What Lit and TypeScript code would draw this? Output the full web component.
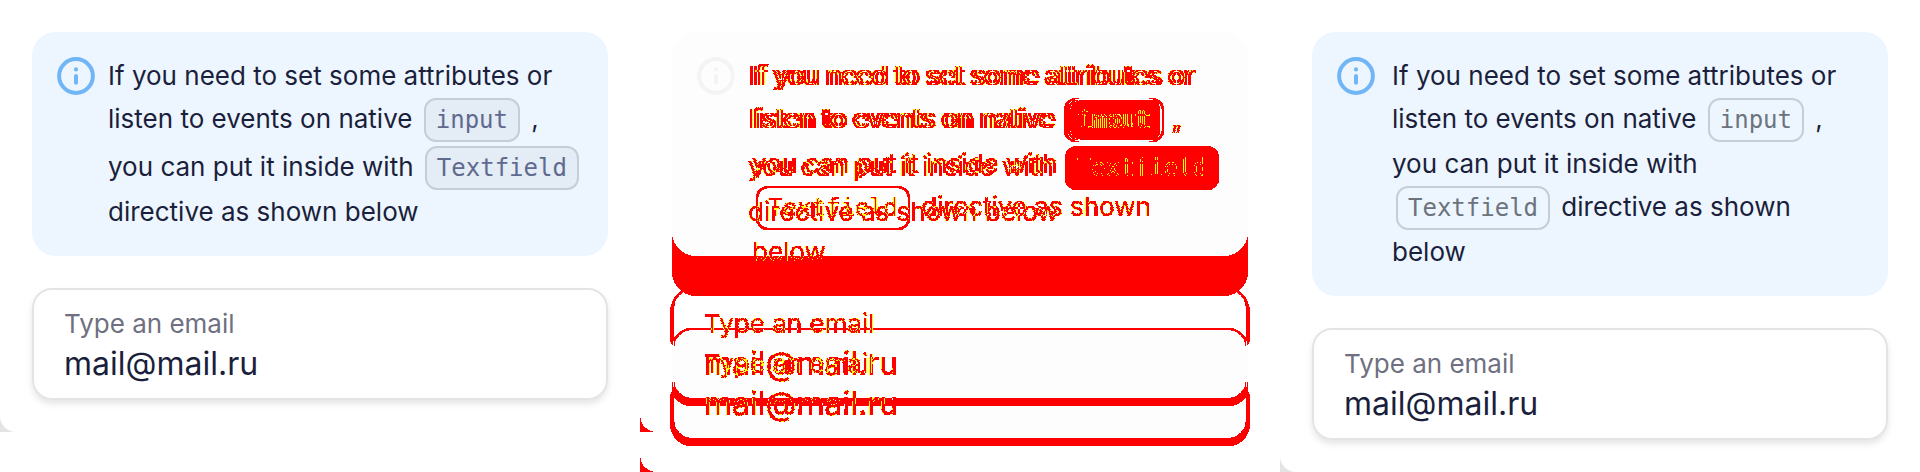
import { LitElement, html, css, svg } from "lit";
import { customElement, property } from "lit/decorators.js";

@customElement("info-note")
class InfoNote extends LitElement {
  static styles = css`
    :host {
      display: flex;
      align-items: flex-start;
      gap: var(--note-gap, 12px);
      padding: 24px;
      border-radius: 24px;
      background: #edf6ff;
      color: #1b1f3b;
    }
    .icon {
      flex: none;
      width: 40px;
      height: 40px;
    }
    .body {
      flex: 1;
      min-width: 0;
    }
  `;
  render() {
    return html`
      <svg class="icon" viewBox="0 0 40 40" aria-hidden="true">
        <circle cx="20" cy="20" r="16.9" fill="none" stroke="#70b6f6" stroke-width="4" />
        <circle cx="20" cy="13.4" r="2.1" fill="#70b6f6" />
        <path d="M20 19.9v6.8" stroke="#70b6f6" stroke-width="4" stroke-linecap="round" />
      </svg>
      <div class="body"><slot></slot></div>
    `;
  }
}

@customElement("email-preview")
class EmailPreview extends LitElement {
  @property({ reflect: true }) variant = "before";

  static styles = css`
    :host {
      display: flow-root;
      background: #e4e4e4;
    }
    .page {
      display: flex;
      flex-direction: column;
      gap: 32px;
      padding: 32px;
      border-radius: 0 0 0 16px;
      background: #fff;
      font: 26px/40px Inter, sans-serif;
    }
    info-note {
      --note-gap: 12px;
    }
    :host([variant="after"]) info-note {
      --note-gap: 16px;
    }
    code {
      display: inline-block;
      margin: 2px 4px;
      padding: 0 10px;
      border: 2px solid #c7cdd7;
      border-radius: 12px;
      background: #e4ecf5;
      color: #5f6a8e;
      font: 24px/40px "DejaVu Sans Mono", monospace;
    }
    :host([variant="after"]) code {
      background: transparent;
      color: #6c737c;
    }
    .field {
      display: flex;
      flex-direction: column;
      padding: 14px 30px;
      border: 2px solid #e4e4e4;
      border-radius: 20px;
      box-shadow: 0 4px 6px rgba(0, 0, 0, 0.1);
    }
    label {
      color: #6f7081;
    }
    input {
      width: 100%;
      height: 40px;
      padding: 0;
      border: 0;
      outline: 0;
      background: none;
      color: #1b1f3b;
      font: 32px/40px Inter, sans-serif;
    }
  `;
  render() {
    return html`
      <div class="page">
        <info-note>
          If you need to set some attributes or listen to events on native
          <code>input</code> , you can put it inside with
          <code>Textfield</code> directive as shown below
        </info-note>
        <div class="field">
          <label for="email">Type an email</label>
          <input id="email" type="email" value="mail@mail.ru" />
        </div>
      </div>
    `;
  }
}

@customElement("app-root")
class AppRoot extends LitElement {
  static styles = css`
    :host {
      display: grid;
      grid-template-columns: repeat(3, minmax(0, 1fr));
      align-items: start;
      min-height: 100vh;
      background: #fff;
    }
    .stack {
      display: grid;
    }
    .compare {
      display: grid;
      align-items: start;
      background: #fff;
      isolation: isolate;
      filter: url(#difference);
    }
    .stack > *,
    .compare > * {
      grid-area: 1 / 1;
      min-width: 0;
    }
    .ghost {
      display: flex;
      flex-direction: column;
      gap: 32px;
      padding: 32px;
      filter: grayscale(1);
      opacity: 0.12;
    }
    .ghost info-note {
      flex: 1;
    }
    .ghost-field {
      height: 112px;
      border-radius: 20px;
      background: #f4f4f4;
    }
    .top {
      mix-blend-mode: difference;
    }
    .defs {
      position: absolute;
      width: 0;
      height: 0;
    }
  `;

  // Turns the blended difference into flat colours: red for changed pixels, yellow for soft edges.
  private filter() {
    const levels = Array.from({ length: 50 }, (_, i) => i / 50);
    const changed = levels.map((v) => (v < 0.02 ? 0 : 1)).join(" ");
    const edge = levels.map((v) => (v > 0.15 && v < 0.4 ? 1 : 0)).join(" ");
    return svg`
      <filter id="difference" x="0" y="0" width="100%" height="100%" color-interpolation-filters="sRGB">
        <feColorMatrix in="SourceGraphic" values="0 0 0 0 1  0 0 0 0 0  0 0 0 0 0  0.4 0.4 0.2 0 0" />
        <feComponentTransfer result="red"><feFuncA type="discrete" tableValues=${changed} /></feComponentTransfer>
        <feColorMatrix in="SourceGraphic" values="0 0 0 0 1  0 0 0 0 1  0 0 0 0 0  0.4 0.4 0.2 0 0" />
        <feComponentTransfer result="yellow"><feFuncA type="discrete" tableValues=${edge} /></feComponentTransfer>
        <feMerge><feMergeNode in="red" /><feMergeNode in="yellow" /></feMerge>
      </filter>`;
  }

  render() {
    return html`
      <svg class="defs" aria-hidden="true">${this.filter()}</svg>
      <email-preview variant="before"></email-preview>
      <div class="stack">
        <div class="ghost" aria-hidden="true">
          <info-note></info-note>
          <div class="ghost-field"></div>
        </div>
        <div class="compare">
          <email-preview variant="before"></email-preview>
          <email-preview class="top" variant="after"></email-preview>
        </div>
      </div>
      <email-preview variant="after"></email-preview>
    `;
  }
}
